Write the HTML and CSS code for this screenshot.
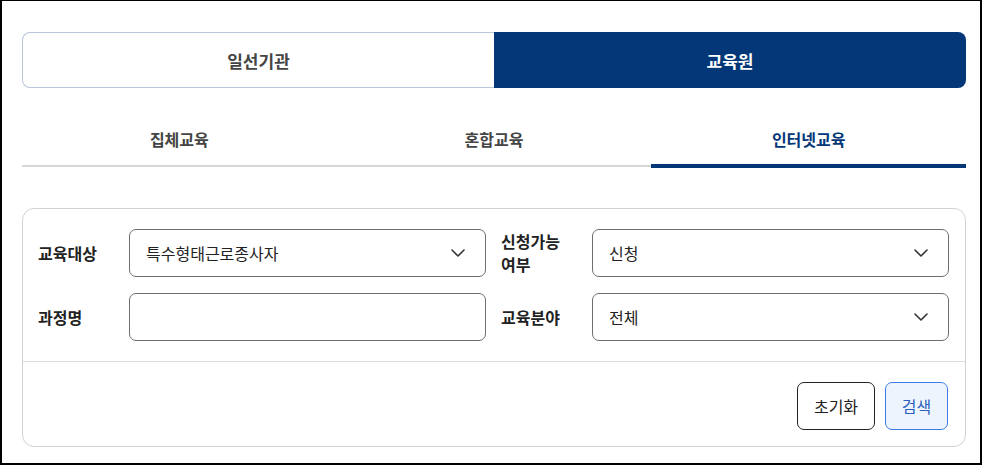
FILE: index.html
```html
<!DOCTYPE html>
<html lang="ko">
<head>
<meta charset="utf-8">
<title>교육 검색</title>
<link rel="stylesheet" href="styles.css">
</head>
<body>
<div class="frame">
  <div class="toggle">
    <button class="toggle-btn">일선기관</button>
    <button class="toggle-btn is-active">교육원</button>
  </div>

  <div class="tabs">
    <div class="tab">집체교육</div>
    <div class="tab">혼합교육</div>
    <div class="tab is-active">인터넷교육</div>
  </div>

  <div class="search-box">
    <div class="fields">
      <div class="field">
        <div class="label">교육대상</div>
        <div class="select">
          <span>특수형태근로종사자</span>
          <svg class="chev" width="14" height="8" viewBox="0 0 14 8"><path d="M1 1 L7 7 L13 1" fill="none" stroke="#333" stroke-width="1.6" stroke-linecap="round" stroke-linejoin="round"/></svg>
        </div>
      </div>
      <div class="field">
        <div class="label">신청가능 여부</div>
        <div class="select">
          <span>신청</span>
          <svg class="chev" width="14" height="8" viewBox="0 0 14 8"><path d="M1 1 L7 7 L13 1" fill="none" stroke="#333" stroke-width="1.6" stroke-linecap="round" stroke-linejoin="round"/></svg>
        </div>
      </div>
      <div class="field">
        <div class="label">과정명</div>
        <div class="input"></div>
      </div>
      <div class="field">
        <div class="label">교육분야</div>
        <div class="select">
          <span>전체</span>
          <svg class="chev" width="14" height="8" viewBox="0 0 14 8"><path d="M1 1 L7 7 L13 1" fill="none" stroke="#333" stroke-width="1.6" stroke-linecap="round" stroke-linejoin="round"/></svg>
        </div>
      </div>
    </div>
    <div class="actions">
      <button class="btn btn-reset">초기화</button>
      <button class="btn btn-search">검색</button>
    </div>
  </div>
</div>
</body>
</html>
```

FILE: styles.css
```css
* { box-sizing: border-box; }
html, body { margin: 0; padding: 0; }
body {
  width: 982px;
  height: 465px;
  background: #fff;
  font-family: "Noto Sans CJK KR", "Noto Sans", sans-serif;
  color: #222;
}
.frame {
  width: 982px;
  height: 465px;
  border: 2px solid #000;
  border-top-width: 1px;
  padding: 31px 14px 0 20px;
}
.toggle {
  display: grid;
  grid-template-columns: 472px 472px;
  height: 56px;
}
.toggle-btn {
  font-family: inherit;
  font-size: 17px;
  font-weight: 700;
  color: #444;
  background: #fff;
  border: 1px solid #b9c7db;
  border-right: none;
  border-radius: 8px 0 0 8px;
  padding: 0;
}
.toggle-btn.is-active {
  background: #033777;
  color: #fff;
  border: none;
  border-radius: 0 8px 8px 0;
}
.tabs {
  display: flex;
  margin-top: 22px;
  border-bottom: 2px solid #d6d6d6;
}
.tab {
  flex: 1;
  position: relative;
  text-align: center;
  font-size: 16px;
  font-weight: 700;
  color: #444;
  line-height: 22px;
  padding: 18px 0 15px;
}
.tab.is-active { color: #033777; }
.tab.is-active::after {
  content: "";
  position: absolute;
  left: 0;
  right: 0;
  bottom: -3px;
  height: 4px;
  background: #033777;
}
.search-box {
  margin-top: 41px;
  border: 1px solid #d2d2d2;
  border-radius: 12px;
}
.fields {
  display: grid;
  grid-template-columns: 1fr 1fr;
  column-gap: 15px;
  row-gap: 16px;
  padding: 20px 16px 20px 15px;
}
.field {
  display: grid;
  grid-template-columns: 75px 1fr;
  column-gap: 16px;
  align-items: center;
}
.label {
  font-size: 16px;
  font-weight: 700;
  line-height: 23px;
  color: #222;
  word-break: keep-all;
}
.select, .input {
  height: 48px;
  border: 1px solid #6e6e6e;
  border-radius: 7px;
  background: #fff;
}
.select {
  display: flex;
  align-items: center;
  justify-content: space-between;
  padding: 0 20px 0 16px;
  font-size: 16px;
  color: #222;
}
.chev { display: block; }
.actions {
  display: flex;
  justify-content: flex-end;
  gap: 10px;
  border-top: 1px solid #dcdcdc;
  padding: 20px 17px 16px;
}
.btn {
  height: 48px;
  font-family: inherit;
  font-size: 16px;
  border-radius: 7px;
  padding: 0;
}
.btn-reset {
  width: 78px;
  background: #fff;
  border: 1px solid #222;
  color: #222;
}
.btn-search {
  width: 63px;
  background: #eef4fe;
  border: 1px solid #3b7cea;
  color: #2b5fbf;
}
```
